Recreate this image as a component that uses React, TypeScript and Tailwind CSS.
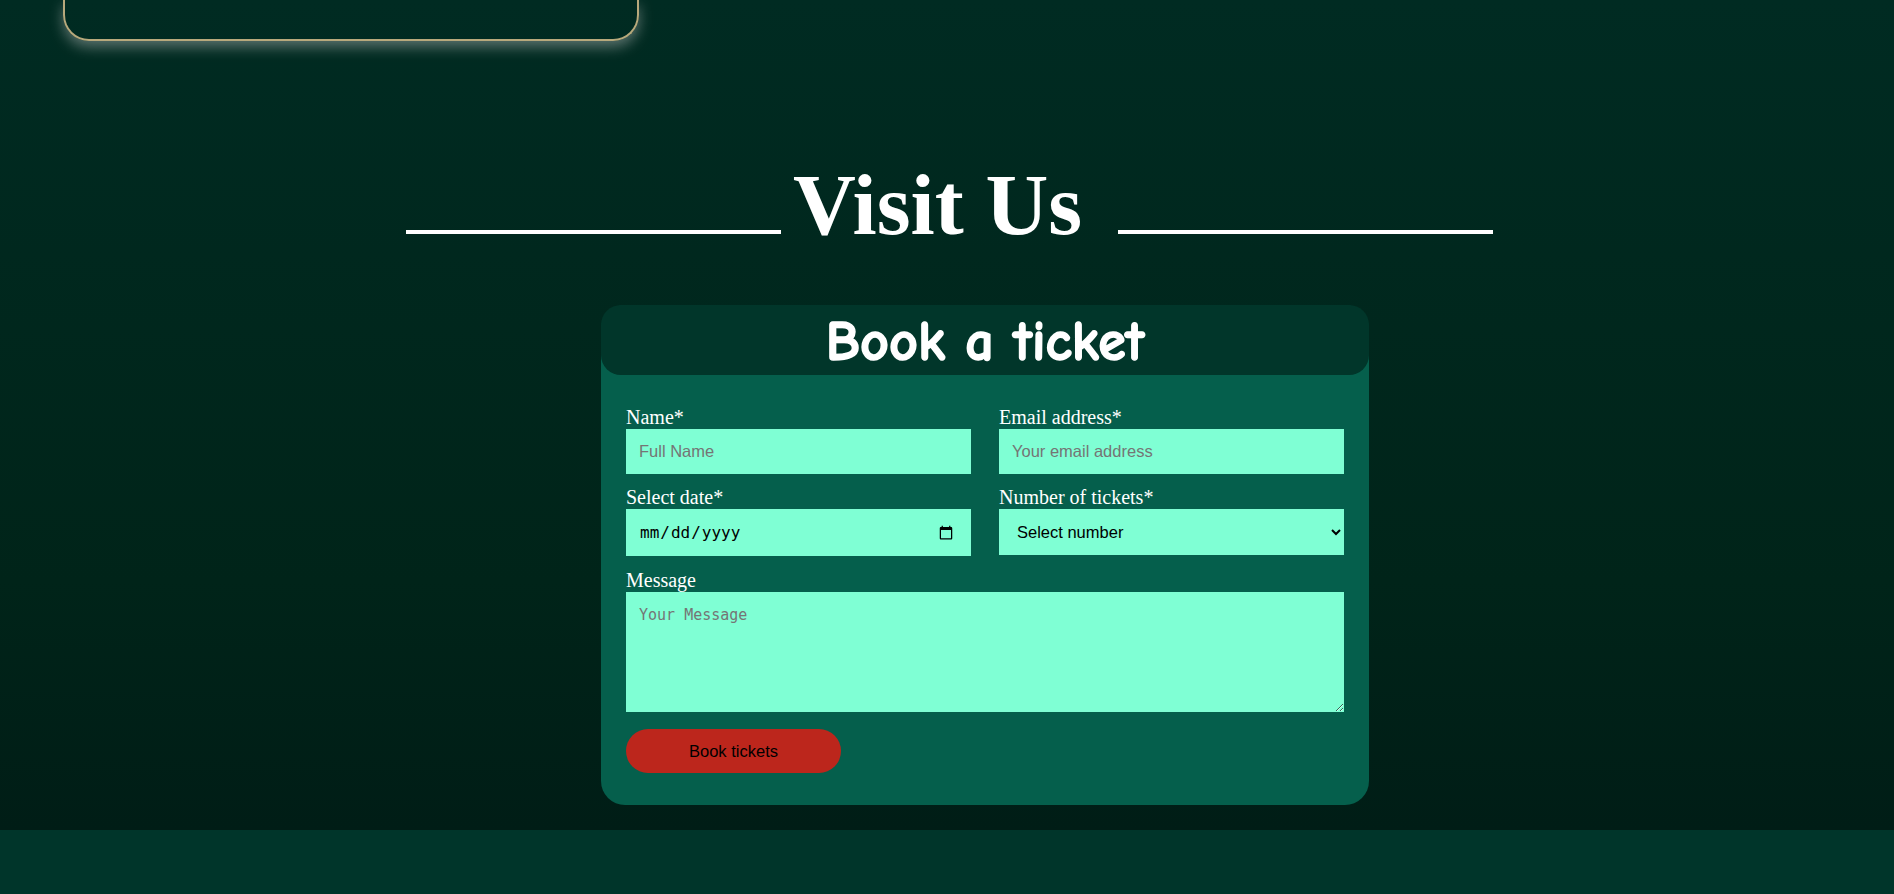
import React from "react";

const serif = "font-['Liberation_Serif','Times_New_Roman',serif]";

const Field = ({ label, children }: { label: string; children: React.ReactNode }) =>
<div className="flex flex-col">
    <label className={`${serif} text-[20px] leading-[23px] text-white`}>{label}</label>
    {children}
  </div>;


export default function App() {
  return (
    <div className="min-h-screen bg-[#00352a]">
      <section className="bg-[linear-gradient(180deg,#002b22_0%,#002419_70%,#001d16_100%)] pb-[25px]">
        {/* card from the section above, cut off by the viewport */}
        <div className="ml-[63px] w-[576px] h-[41px] rounded-b-[26px] border-2 border-t-0 border-[#b7a97c] shadow-[0_6px_14px_rgba(200,200,200,0.45)]" />

        <div className="mt-[114px] pl-[5px] flex justify-center items-baseline">
          <div className="w-[375px] h-[4px] bg-white" />
          <h2 className={`${serif} ml-3 mr-9 text-[87px] leading-[100px] font-bold text-white`}>
            Visit Us
          </h2>
          <div className="w-[375px] h-[4px] bg-white" />
        </div>

        <div className="mt-[50px] ml-[601px] w-[768px] rounded-[24px] bg-[#055f4c] pb-[32px]">
          <div className="h-[70px] rounded-[20px] bg-[#01362a] flex items-center justify-center">
            <h3 className="font-['Comic_Sans_MS','Comic_Neue','Noto_Sans',sans-serif] text-[56px] font-black text-white leading-none pt-[4px] [-webkit-text-stroke:1.5px_white]">
              Book a ticket
            </h3>
          </div>

          <form className="px-[25px] pt-[31px]">
            <div className="grid grid-cols-2 gap-x-[28px] gap-y-[12px]">
              <Field label="Name*">
                <input
                  type="text"
                  placeholder="Full Name"
                  className="h-[45px] bg-[#7fffd4] px-[13px] text-[16.5px] font-['Liberation_Sans',Arial,sans-serif] text-black placeholder:text-[#757575] outline-none" />
              </Field>
              <Field label="Email address*">
                <input
                  type="email"
                  placeholder="Your email address"
                  className="h-[45px] bg-[#7fffd4] px-[13px] text-[16.5px] font-['Liberation_Sans',Arial,sans-serif] text-black placeholder:text-[#757575] outline-none" />
              </Field>
              <Field label="Select date*">
                <input
                  type="date"
                  className="h-[47px] bg-[#7fffd4] pl-[13px] pr-[15px] text-[16px] font-['DejaVu_Sans_Mono',monospace] text-black outline-none" />
              </Field>
              <Field label="Number of tickets*">
                <select
                  defaultValue=""
                  className="h-[46px] bg-[#7fffd4] pl-[14px] pr-[8px] text-[16.5px] font-['Liberation_Sans',Arial,sans-serif] text-black outline-none">
                  <option value="" disabled>
                    Select number
                  </option>
                  <option>1</option>
                  <option>2</option>
                  <option>3</option>
                  <option>4</option>
                </select>
              </Field>
            </div>

            <div className="mt-[13px]">
              <Field label="Message">
                <textarea
                  placeholder="Your Message"
                  className="h-[120px] bg-[#7fffd4] px-[13px] pt-[12px] text-[15px] font-['DejaVu_Sans_Mono',monospace] text-black placeholder:text-[#757575] outline-none" />
              </Field>
            </div>

            <button
              type="button"
              className="mt-[17px] w-[215px] h-[44px] rounded-full bg-[#bc261c] text-[16.5px] font-['Liberation_Sans',Arial,sans-serif] text-black">
              Book tickets
            </button>
          </form>
        </div>
      </section>
      <footer className="h-[64px] bg-[#00352a]" />
    </div>);

}
